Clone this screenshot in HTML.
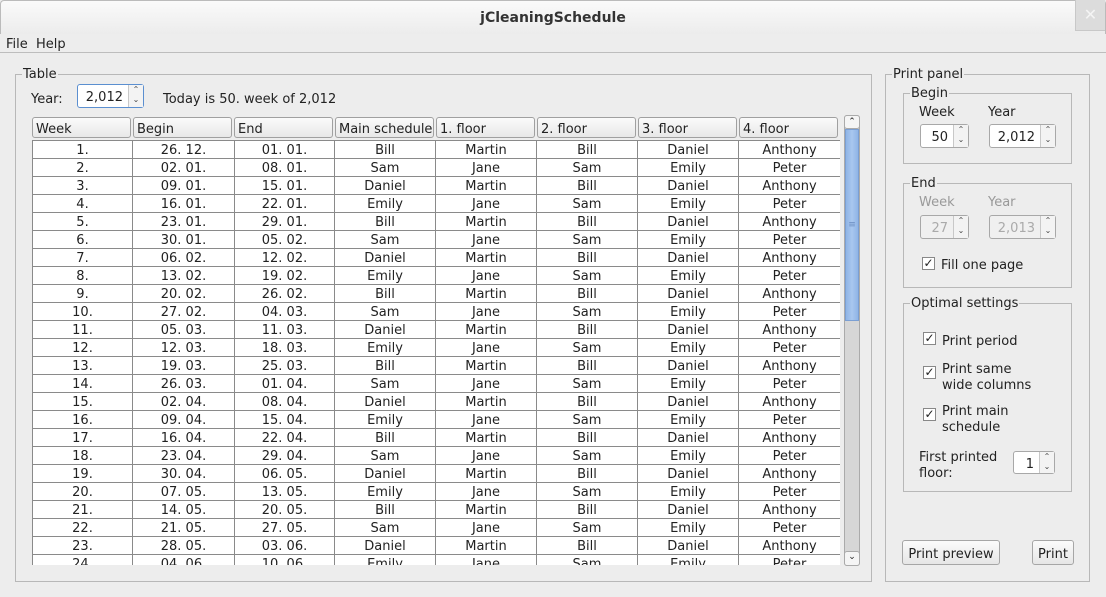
<!DOCTYPE html>
<html><head><meta charset="utf-8"><style>
*{margin:0;padding:0;box-sizing:border-box}
body{width:1106px;height:597px;background:#ededed;font-family:"DejaVu Sans","Liberation Sans",sans-serif;font-size:13px;color:#222;position:relative;overflow:hidden}
.a{position:absolute}
.title{left:0;top:0;width:1106px;height:34px;background:linear-gradient(#fafafa,#ececec);text-align:center;line-height:34px;font-weight:bold;font-size:14px;color:#333;border:1px solid #bbb;border-bottom:none;border-radius:4px 4px 0 0}
.close{left:1075px;top:0;width:30px;height:31px;background:#dcdcdc;border-left:1px solid #c8c8c8;border-bottom:1px solid #c8c8c8;color:#f4f4f4;font-size:16px;text-align:center;line-height:30px;font-weight:bold}
.menu{left:0;top:34px;width:1106px;height:19px;border-bottom:1px solid #bdbdbd;line-height:22px;padding-left:6px}
fieldset{position:absolute;border:1px solid #b8b8b8}
legend{padding:0 1px;margin-left:6px;line-height:13px}
.spin{position:absolute;background:#fff;border:1px solid #a8a8a8;border-radius:3px;text-align:right;padding-right:20px;line-height:25px}
.spin b{position:absolute;right:0;top:0;width:15px;height:100%;border-left:1px solid #c8c8c8;background:#f3f3f3;font-weight:normal;font-size:8px;line-height:10px;text-align:center;color:#444}
.dis{color:#aaa;background:#f0f0f0}
table{position:absolute;left:32px;top:138px;border-collapse:collapse;table-layout:fixed;background:#fff}
td{border:1px solid #8a8a8a;height:18px;text-align:center;line-height:15px;padding:2px 0 0 0;vertical-align:top;white-space:nowrap;overflow:hidden}
.hd{position:absolute;top:117px;height:21px;border:1px solid #a0a0a0;border-radius:3px;background:linear-gradient(#fbfbfb,#e8e8e8);line-height:24px;padding-left:3px}
.cb{position:absolute;width:13px;height:13px;border:1px solid #888;background:#fff;font-size:12px;line-height:11px;text-align:center}
.btn{position:absolute;border:1px solid #a6a6a6;border-radius:3px;background:linear-gradient(#fbfbfb,#e6e6e6);text-align:center;line-height:27px}
</style></head><body>
<div class="a title">jCleaningSchedule</div>
<div class="a close">✕</div>
<div class="a menu">File&nbsp;&nbsp;Help</div>

<fieldset style="left:15px;top:68px;width:857px;height:514px"><legend>Table</legend></fieldset>
<div class="a" style="left:31px;top:92px">Year:</div>
<div class="spin" style="left:77px;top:84px;width:67px;height:24px;border-color:#5b8fd0">2,012<b>⌃<br>⌄</b></div>
<div class="a" style="left:163px;top:92px">Today is 50. week of 2,012</div>

<div class="hd" style="left:32px;width:99px">Week</div>
<div class="hd" style="left:133px;width:99px">Begin</div>
<div class="hd" style="left:234px;width:99px">End</div>
<div class="hd" style="left:335px;width:99px">Main schedule</div>
<div class="hd" style="left:436px;width:99px">1. floor</div>
<div class="hd" style="left:537px;width:99px">2. floor</div>
<div class="hd" style="left:638px;width:99px">3. floor</div>
<div class="hd" style="left:739px;width:99px">4. floor</div>

<div class="a" style="left:32px;top:138px;width:808px;height:427px;overflow:hidden">
<table style="left:0;top:2px;width:808px">
<colgroup><col style="width:100px"><col style="width:102px"><col style="width:100px"><col style="width:101px"><col style="width:101px"><col style="width:101px"><col style="width:101px"><col style="width:102px"></colgroup>
<tr><td>1.</td><td>26. 12.</td><td>01. 01.</td><td>Bill</td><td>Martin</td><td>Bill</td><td>Daniel</td><td>Anthony</td></tr>
<tr><td>2.</td><td>02. 01.</td><td>08. 01.</td><td>Sam</td><td>Jane</td><td>Sam</td><td>Emily</td><td>Peter</td></tr>
<tr><td>3.</td><td>09. 01.</td><td>15. 01.</td><td>Daniel</td><td>Martin</td><td>Bill</td><td>Daniel</td><td>Anthony</td></tr>
<tr><td>4.</td><td>16. 01.</td><td>22. 01.</td><td>Emily</td><td>Jane</td><td>Sam</td><td>Emily</td><td>Peter</td></tr>
<tr><td>5.</td><td>23. 01.</td><td>29. 01.</td><td>Bill</td><td>Martin</td><td>Bill</td><td>Daniel</td><td>Anthony</td></tr>
<tr><td>6.</td><td>30. 01.</td><td>05. 02.</td><td>Sam</td><td>Jane</td><td>Sam</td><td>Emily</td><td>Peter</td></tr>
<tr><td>7.</td><td>06. 02.</td><td>12. 02.</td><td>Daniel</td><td>Martin</td><td>Bill</td><td>Daniel</td><td>Anthony</td></tr>
<tr><td>8.</td><td>13. 02.</td><td>19. 02.</td><td>Emily</td><td>Jane</td><td>Sam</td><td>Emily</td><td>Peter</td></tr>
<tr><td>9.</td><td>20. 02.</td><td>26. 02.</td><td>Bill</td><td>Martin</td><td>Bill</td><td>Daniel</td><td>Anthony</td></tr>
<tr><td>10.</td><td>27. 02.</td><td>04. 03.</td><td>Sam</td><td>Jane</td><td>Sam</td><td>Emily</td><td>Peter</td></tr>
<tr><td>11.</td><td>05. 03.</td><td>11. 03.</td><td>Daniel</td><td>Martin</td><td>Bill</td><td>Daniel</td><td>Anthony</td></tr>
<tr><td>12.</td><td>12. 03.</td><td>18. 03.</td><td>Emily</td><td>Jane</td><td>Sam</td><td>Emily</td><td>Peter</td></tr>
<tr><td>13.</td><td>19. 03.</td><td>25. 03.</td><td>Bill</td><td>Martin</td><td>Bill</td><td>Daniel</td><td>Anthony</td></tr>
<tr><td>14.</td><td>26. 03.</td><td>01. 04.</td><td>Sam</td><td>Jane</td><td>Sam</td><td>Emily</td><td>Peter</td></tr>
<tr><td>15.</td><td>02. 04.</td><td>08. 04.</td><td>Daniel</td><td>Martin</td><td>Bill</td><td>Daniel</td><td>Anthony</td></tr>
<tr><td>16.</td><td>09. 04.</td><td>15. 04.</td><td>Emily</td><td>Jane</td><td>Sam</td><td>Emily</td><td>Peter</td></tr>
<tr><td>17.</td><td>16. 04.</td><td>22. 04.</td><td>Bill</td><td>Martin</td><td>Bill</td><td>Daniel</td><td>Anthony</td></tr>
<tr><td>18.</td><td>23. 04.</td><td>29. 04.</td><td>Sam</td><td>Jane</td><td>Sam</td><td>Emily</td><td>Peter</td></tr>
<tr><td>19.</td><td>30. 04.</td><td>06. 05.</td><td>Daniel</td><td>Martin</td><td>Bill</td><td>Daniel</td><td>Anthony</td></tr>
<tr><td>20.</td><td>07. 05.</td><td>13. 05.</td><td>Emily</td><td>Jane</td><td>Sam</td><td>Emily</td><td>Peter</td></tr>
<tr><td>21.</td><td>14. 05.</td><td>20. 05.</td><td>Bill</td><td>Martin</td><td>Bill</td><td>Daniel</td><td>Anthony</td></tr>
<tr><td>22.</td><td>21. 05.</td><td>27. 05.</td><td>Sam</td><td>Jane</td><td>Sam</td><td>Emily</td><td>Peter</td></tr>
<tr><td>23.</td><td>28. 05.</td><td>03. 06.</td><td>Daniel</td><td>Martin</td><td>Bill</td><td>Daniel</td><td>Anthony</td></tr>
<tr><td>24.</td><td>04. 06.</td><td>10. 06.</td><td>Emily</td><td>Jane</td><td>Sam</td><td>Emily</td><td>Peter</td></tr>
</table></div>

<div class="a" style="left:844px;top:115px;width:16px;height:451px;background:#d6d6d6;border:1px solid #aaa;border-radius:3px"></div>
<div class="a" style="left:844px;top:115px;width:16px;height:14px;background:#f5f5f5;border:1px solid #aaa;border-radius:3px;font-size:9px;text-align:center;line-height:13px">⌃</div>
<div class="a" style="left:845px;top:129px;width:14px;height:192px;background:linear-gradient(90deg,#8fb4e6,#a9c7ef,#8fb4e6);border:1px solid #7b9fd3;color:#6a8cc0;font-size:9px;text-align:center;line-height:190px">≡</div>
<div class="a" style="left:844px;top:551px;width:16px;height:15px;background:#f5f5f5;border:1px solid #aaa;border-radius:3px;font-size:9px;text-align:center;line-height:11px">⌄</div>

<fieldset style="left:885px;top:68px;width:205px;height:514px"><legend>Print panel</legend></fieldset>
<fieldset style="left:903px;top:87px;width:169px;height:77px"><legend>Begin</legend></fieldset>
<div class="a" style="left:919px;top:105px">Week</div><div class="a" style="left:988px;top:105px">Year</div>
<div class="spin" style="left:920px;top:124px;width:49px;height:24px">50<b>⌃<br>⌄</b></div>
<div class="spin" style="left:989px;top:124px;width:67px;height:24px">2,012<b>⌃<br>⌄</b></div>

<fieldset style="left:903px;top:177px;width:169px;height:111px"><legend>End</legend></fieldset>
<div class="a" style="left:919px;top:195px;color:#999">Week</div><div class="a" style="left:988px;top:195px;color:#999">Year</div>
<div class="spin dis" style="left:920px;top:215px;width:49px;height:24px">27<b>⌃<br>⌄</b></div>
<div class="spin dis" style="left:989px;top:215px;width:67px;height:24px">2,013<b>⌃<br>⌄</b></div>
<div class="cb" style="left:922px;top:257px">✓</div><div class="a" style="left:941px;top:258px">Fill one page</div>

<fieldset style="left:903px;top:297px;width:169px;height:195px"><legend>Optimal settings</legend></fieldset>
<div class="cb" style="left:923px;top:332px">✓</div><div class="a" style="left:942px;top:334px">Print period</div>
<div class="cb" style="left:923px;top:366px">✓</div><div class="a" style="left:942px;top:362px;line-height:16px">Print same<br>wide columns</div>
<div class="cb" style="left:923px;top:408px">✓</div><div class="a" style="left:942px;top:404px;line-height:16px">Print main<br>schedule</div>
<div class="a" style="left:919px;top:450px;line-height:16px">First printed<br>floor:</div>
<div class="spin" style="left:1013px;top:451px;width:42px;height:23px">1<b>⌃<br>⌄</b></div>

<div class="btn" style="left:902px;top:540px;width:98px;height:25px">Print preview</div>
<div class="btn" style="left:1032px;top:540px;width:42px;height:25px">Print</div>
</body></html>
